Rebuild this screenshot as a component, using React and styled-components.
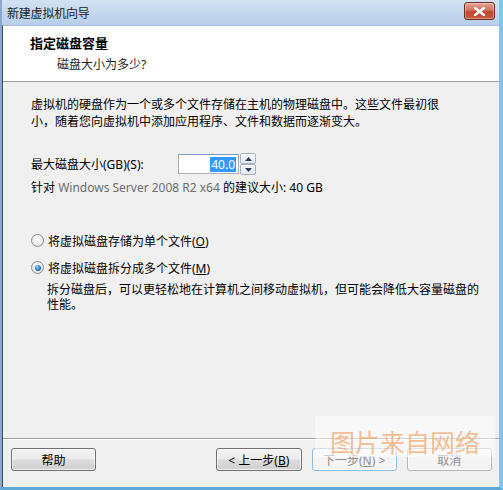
import React from "react";
import styled, { createGlobalStyle } from "styled-components";

const Global = createGlobalStyle`
  html, body { margin: 0; padding: 0; background: #fff; }
  body {
    font-family: "Noto Sans", "Noto Sans CJK SC", sans-serif;
    font-size: 12px;
    color: #000;
  }
`;

const Window = styled.div`
  position: relative;
  width: 503px;
  height: 490px;
  box-sizing: border-box;
  display: flex;
  flex-direction: column;
  background: linear-gradient(180deg, #c6d9ef 0%, #b9cfe9 100%);
  border-left: 2px solid #8aa9cc;
  border-right: 4px solid #7cc8ea;
  border-bottom: 3px solid #5fa9d6;
  overflow: hidden;
`;

const TitleBar = styled.div`
  height: 25px;
  flex: none;
  display: flex;
  align-items: center;
  justify-content: space-between;
  padding: 0 4px 0 5px;
  background: linear-gradient(180deg, #d3e2f3 0%, #c3d7ee 55%, #b8cfea 100%);
`;

const Title = styled.span`
  font-size: 12px;
  color: #1a1a1a;
  letter-spacing: -0.2px;
`;

const CloseButton = styled.div`
  width: 29px;
  height: 16px;
  margin-top: -3px;
  border: 1px solid #6d2c23;
  border-radius: 3px;
  background: linear-gradient(180deg, #e6a795 0%, #d4715c 45%, #c0462f 55%, #c95a3f 100%);
  display: flex;
  align-items: center;
  justify-content: center;
  box-shadow: inset 0 0 0 1px rgba(255, 255, 255, 0.35);
`;

const Client = styled.div`
  flex: 1;
  display: flex;
  flex-direction: column;
  background: #f0f0f0;
  border-left: 1px solid #3c4a5a;
  border-top: 1px solid #a9bdd6;
`;

const Header = styled.div`
  height: 56px;
  flex: none;
  background: #fff;
  border-bottom: 1px solid #a0a0a0;
  box-sizing: border-box;
  padding: 9px 0 0 27px;
`;

const HeaderTitle = styled.div`
  font-weight: bold;
  font-size: 13px;
  line-height: 17px;
`;

const HeaderSub = styled.div`
  font-size: 12px;
  line-height: 17px;
  margin: 4px 0 0 27px;
  color: #222;
`;

const Body = styled.div`
  flex: 1;
  padding: 14px 0 0 28px;
  display: flex;
  flex-direction: column;
  border-bottom: 1px solid #a0a0a0;
  box-shadow: 0 1px 0 #fff;
`;

const Para = styled.p`
  margin: 0;
  line-height: 17px;
`;

const SizeRow = styled.div`
  display: flex;
  align-items: center;
  margin-top: 24px;
  height: 20px;
`;

const Label = styled.span`
  width: 147px;
`;

const NumberBox = styled.div`
  width: 61px;
  height: 20px;
  box-sizing: border-box;
  border: 1px solid #abadb3;
  border-top-color: #7a9cc4;
  background: #fff;
  display: flex;
  align-items: center;
  justify-content: flex-end;
  padding-right: 2px;
`;

const Selected = styled.span`
  background: #3399ff;
  color: #fff;
  font-size: 12px;
  line-height: 15px;
  padding: 0 1px;
`;

const Spinner = styled.div`
  display: flex;
  flex-direction: column;
  margin-left: 1px;
`;

const SpinPart = styled.div`
  width: 14px;
  height: 9px;
  border: 1px solid #a7b3c3;
  border-radius: 2px;
  background: linear-gradient(180deg, #f7f9fc 0%, #e3e9f1 100%);
  display: flex;
  align-items: center;
  justify-content: center;
`;

const Hint = styled.div`
  margin-top: 5px;
  line-height: 17px;
`;

const Gray = styled.span`
  color: #6d6d6d;
`;

const Options = styled.div`
  margin-top: 36px;
  display: flex;
  flex-direction: column;
  gap: 10px;
`;

const Option = styled.label`
  display: flex;
  align-items: center;
  gap: 4px;
  height: 17px;
`;

const Radio = styled.span`
  width: 11px;
  height: 11px;
  border-radius: 50%;
  border: 1px solid #8e8f8f;
  background: radial-gradient(circle at 50% 40%, #ffffff 0%, #e9e9e9 60%, #d4d4d4 100%);
  display: flex;
  align-items: center;
  justify-content: center;
  flex: none;

  &::after {
    content: "";
    display: ${(p) => (p.$checked ? "block" : "none")};
    width: 6px;
    height: 6px;
    border-radius: 50%;
    background: radial-gradient(circle at 40% 35%, #8fd0f7 0%, #1d6fbf 60%, #0d3f7a 100%);
  }
`;

const Desc = styled.p`
  margin: 6px 0 0 16px;
  line-height: 15px;
`;

const Footer = styled.div`
  height: 39px;
  flex: none;
  display: flex;
  align-items: flex-start;
  padding: 9px 7px 0 8px;
  gap: 10px;
`;

const Button = styled.button`
  width: 86px;
  height: 23px;
  box-sizing: border-box;
  font-family: inherit;
  font-size: 12px;
  border-radius: 3px;
  padding: 0;
  border: 1px solid ${(p) => (p.$focus ? "#8cbde0" : p.disabled ? "#b5b8bb" : "#707070")};
  color: ${(p) => (p.disabled ? "#8d8d8d" : "#000")};
  background: ${(p) =>
    p.disabled
      ? "#f4f4f4"
      : "linear-gradient(180deg, #f4f4f4 0%, #ebebeb 48%, #dcdcdc 52%, #cfcfcf 100%)"};
  box-shadow: inset 0 0 0 1px rgba(255, 255, 255, 0.7);
  margin-left: ${(p) => p.$push || 0};
`;

const U = styled.span`
  text-decoration: underline;
`;

const Watermark = styled.div`
  position: absolute;
  left: 313px;
  top: 416px;
  width: 180px;
  height: 41px;
  background: rgba(255, 255, 255, 0.55);
  display: flex;
  align-items: flex-end;
  justify-content: center;
  padding-bottom: 3px;
  box-sizing: border-box;
  white-space: nowrap;
  font-family: "Noto Sans CJK SC", sans-serif;
  font-size: 25px;
  line-height: 26px;
  color: rgba(240, 165, 105, 0.7);
  pointer-events: none;
`;

function Arrow({ down }) {
  return (
    <svg width="7" height="4" viewBox="0 0 7 4">
      <path d={down ? "M0 0h7L3.5 4z" : "M0 4h7L3.5 0z"} fill="#2c3d57" />
    </svg>
  );
}

export default function App() {
  return (
    <>
      <Global />
      <Window>
        <TitleBar>
          <Title>新建虚拟机向导</Title>
          <CloseButton>
            <svg width="11" height="9" viewBox="0 0 11 9">
              <path d="M1 1l9 7M10 1L1 8" stroke="#fff" strokeWidth="2.4" strokeLinecap="square" />
            </svg>
          </CloseButton>
        </TitleBar>
        <Client>
          <Header>
            <HeaderTitle>指定磁盘容量</HeaderTitle>
            <HeaderSub>磁盘大小为多少?</HeaderSub>
          </Header>
          <Body>
            <Para>
              虚拟机的硬盘作为一个或多个文件存储在主机的物理磁盘中。这些文件最初很
              <br />
              小，随着您向虚拟机中添加应用程序、文件和数据而逐渐变大。
            </Para>
            <SizeRow>
              <Label>最大磁盘大小(GB)(S):</Label>
              <NumberBox>
                <Selected>40.0</Selected>
              </NumberBox>
              <Spinner>
                <SpinPart>
                  <Arrow />
                </SpinPart>
                <SpinPart>
                  <Arrow down />
                </SpinPart>
              </Spinner>
            </SizeRow>
            <Hint>
              针对 <Gray>Windows Server 2008 R2 x64</Gray> 的建议大小: 40 GB
            </Hint>
            <Options>
              <Option>
                <Radio />
                <span>
                  将虚拟磁盘存储为单个文件(<U>O</U>)
                </span>
              </Option>
              <Option>
                <Radio $checked />
                <span>
                  将虚拟磁盘拆分成多个文件(<U>M</U>)
                </span>
              </Option>
            </Options>
            <Desc>
              拆分磁盘后，可以更轻松地在计算机之间移动虚拟机，但可能会降低大容量磁盘的
              <br />
              性能。
            </Desc>
          </Body>
          <Footer>
            <Button>帮助</Button>
            <Button $push="110px">
              &lt; 上一步(<U>B</U>)
            </Button>
            <Button disabled $focus>
              下一步(<U>N</U>) &gt;
            </Button>
            <Button disabled>取消</Button>
          </Footer>
        </Client>
        <Watermark>图片来自网络</Watermark>
      </Window>
    </>
  );
}
